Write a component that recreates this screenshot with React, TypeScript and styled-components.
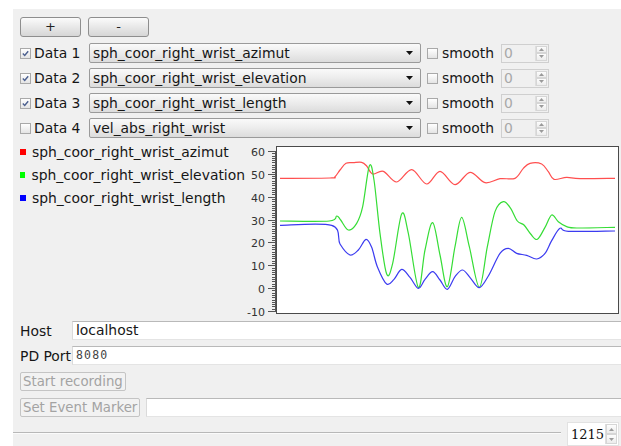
import React from "react";
import styled, { createGlobalStyle } from "styled-components";

const GlobalStyle = createGlobalStyle`
  html, body {
    margin: 0;
    padding: 0;
    background: #ffffff;
  }
  body {
    font-family: "DejaVu Sans", Verdana, sans-serif;
    font-size: 13.9px;
    color: #161616;
  }
`;

const Panel = styled.div`
  margin: 9px 0 0 13px;
  height: 437px;
  background: #f0f0f0;
  padding: 8px 0 0 7px;
  box-sizing: border-box;
  display: flex;
  flex-direction: column;
  overflow: hidden;
`;

const ButtonRow = styled.div`
  display: flex;
  gap: 7px;
`;

const PushButton = styled.button`
  width: 61px;
  height: 20px;
  padding: 0;
  border: 1px solid #8e8e8e;
  border-radius: 3px;
  background: linear-gradient(#fbfbfb, #e6e6e6 55%, #d6d6d6);
  font-family: "DejaVu Sans", Verdana, sans-serif;
  font-size: 13px;
  line-height: 16px;
  color: #222;
`;

const DataList = styled.div`
  margin-top: 6px;
  display: flex;
  flex-direction: column;
  gap: 5px;
`;

const DataRow = styled.div`
  display: flex;
  align-items: center;
  height: 20px;
`;

const CheckLabel = styled.label<{ $width?: number; $gap?: number }>`
  display: flex;
  align-items: center;
  gap: ${(p) => p.$gap ?? 3}px;
  width: ${(p) => (p.$width ? `${p.$width}px` : "auto")};
  flex: none;
  white-space: nowrap;
`;

const Box = styled.span`
  width: 9px;
  height: 9px;
  border: 1px solid #a9a9a9;
  background: linear-gradient(#ffffff, #e4e4e4);
  display: flex;
  align-items: center;
  justify-content: center;
  flex: none;
`;

const CheckBox = ({ checked }: { checked?: boolean }) => (
  <Box>
    {checked && (
      <svg width="7" height="7" viewBox="0 0 7 7">
        <path d="M0.8 3.6 L2.7 5.5 L6.2 1.2" fill="none" stroke="#4b5f8f" strokeWidth="1.4" />
      </svg>
    )}
  </Box>
);

const Combo = styled.div`
  width: 332px;
  height: 20px;
  box-sizing: border-box;
  border: 1px solid #9a9a9a;
  border-radius: 2px;
  background: linear-gradient(#fafafa, #ececec 50%, #dcdcdc);
  display: flex;
  align-items: center;
  padding: 0 7px 0 3px;
  margin-right: 6px;
  flex: none;

  & > span {
    flex: 1;
    white-space: nowrap;
  }
`;

const DropArrow = () => (
  <svg width="7" height="4" viewBox="0 0 7 4">
    <path d="M0 0 H7 L3.5 4 Z" fill="#111" />
  </svg>
);

const SpinBox = styled.div<{ $width: number; $disabled?: boolean }>`
  width: ${(p) => p.$width}px;
  height: 19px;
  box-sizing: border-box;
  border: 1px solid ${(p) => (p.$disabled ? "#cfcfcf" : "#bcbcbc")};
  background: ${(p) => (p.$disabled ? "#f0f0f0" : "#ffffff")};
  display: flex;
  align-items: stretch;
  flex: none;

  & > .value {
    flex: 1;
    padding-left: 2px;
    line-height: 17px;
    color: ${(p) => (p.$disabled ? "#a8a8a8" : "#111")};
  }
`;

const SpinButtons = styled.div`
  width: 11px;
  display: flex;
  flex-direction: column;
  border-left: 1px solid #dedede;
  margin: 1px 1px 1px 0;

  & > span {
    flex: 1;
    display: flex;
    align-items: center;
    justify-content: center;
    background: linear-gradient(#fdfdfd, #ececec);
    border: 1px solid #d6d6d6;
  }
`;

const SpinArrows = () => (
  <SpinButtons>
    <span>
      <svg width="5" height="3" viewBox="0 0 5 3">
        <path d="M0 3 L2.5 0 L5 3 Z" fill="#9a9a9a" />
      </svg>
    </span>
    <span>
      <svg width="5" height="3" viewBox="0 0 5 3">
        <path d="M0 0 L2.5 3 L5 0 Z" fill="#9a9a9a" />
      </svg>
    </span>
  </SpinButtons>
);

const PlotArea = styled.div`
  margin-top: 6px;
  display: flex;
  height: 176px;
`;

const Legend = styled.ul`
  list-style: none;
  margin: 0;
  padding: 0;
  width: 225px;
  display: flex;
  flex-direction: column;
  gap: 7px;
  flex: none;
`;

const LegendItem = styled.li<{ $color: string }>`
  display: flex;
  align-items: center;
  gap: 6px;
  height: 16px;
  white-space: nowrap;

  &::before {
    content: "";
    width: 6px;
    height: 6px;
    background: ${(p) => p.$color};
  }
`;

const FieldRow = styled.div<{ $gap: number }>`
  margin-top: ${(p) => p.$gap}px;
  display: flex;
  align-items: center;
  height: 19px;
`;

const FieldLabel = styled.span`
  width: 52px;
  flex: none;
  white-space: nowrap;
`;

const TextField = styled.div<{ $mono?: boolean }>`
  flex: 1;
  height: 19px;
  box-sizing: border-box;
  background: #ffffff;
  border-top: 1px solid #b9b9b9;
  border-left: 1px solid #dadada;
  border-bottom: 1px solid #e4e4e4;
  padding-left: 3px;
  line-height: 17px;
  white-space: nowrap;
  font-family: ${(p) => (p.$mono ? '"DejaVu Sans Mono", monospace' : "inherit")};
  font-size: ${(p) => (p.$mono ? "11.5px" : "inherit")};
  letter-spacing: ${(p) => (p.$mono ? "1.2px" : "normal")};
  color: ${(p) => (p.$mono ? "#444" : "#161616")};
`;

const FlatButton = styled.button`
  height: 19px;
  padding: 0 2px;
  border: 1px solid #c4c4c4;
  border-radius: 2px;
  background: #f2f2f2;
  font-family: "DejaVu Sans", Verdana, sans-serif;
  font-size: 13.3px;
  color: #a3a3a3;
  margin-right: 6px;
  flex: none;
  white-space: nowrap;
`;

const BottomRow = styled.div`
  margin-top: 5px;
  margin-left: -7px;
  display: flex;
  align-items: flex-start;
`;

const Groove = styled.div`
  flex: 1;
  margin-top: 10px;
  height: 1px;
  background: #b8b8b8;
  border-bottom: 1px solid #fbfbfb;
  margin-right: 6px;
`;

const FrameSpin = styled(SpinBox)`
  height: 24px;
  margin-right: 2px;
  border-color: #e2e2e2;

  & > .value {
    font-family: "DejaVu Serif", serif;
    font-size: 13px;
    line-height: 24px;
    padding-left: 3px;
  }
`;

// curve samples, x/y in 1/3 px steps relative to the plot svg
type Pt = [number, number];

const azimut: Pt[] = [
  [120, 115], [270, 114], [285, 110], [300, 90], [318, 70], [340, 68], [365, 67],
  [380, 78], [398, 102], [430, 94], [470, 126], [515, 89], [560, 132], [600, 94],
  [645, 134], [690, 97], [735, 128], [780, 116], [825, 115], [850, 85], [870, 70],
  [905, 72], [925, 95], [942, 118], [980, 112], [1020, 116], [1125, 115],
];

const elevation: Pt[] = [
  [120, 243], [268, 243], [290, 228], [302, 240], [325, 270], [350, 250],
  [368, 200], [388, 78], [402, 120], [420, 280], [440, 402], [458, 370],
  [485, 222], [505, 280], [535, 442], [555, 330], [578, 248], [600, 345],
  [622, 440], [645, 320], [665, 232], [688, 320], [718, 442], [742, 320],
  [765, 215], [790, 185], [812, 205], [832, 243], [852, 255], [872, 282],
  [892, 298], [915, 262], [935, 225], [955, 245], [980, 260], [1010, 264], [1125, 262],
];

const length: Pt[] = [
  [120, 256], [275, 256], [300, 312], [330, 345], [355, 330], [378, 298],
  [395, 322], [412, 380], [440, 432], [462, 418], [485, 388], [510, 412],
  [535, 445], [555, 418], [578, 395], [600, 420], [622, 448], [645, 410],
  [668, 390], [692, 415], [718, 443], [745, 408], [780, 340], [805, 325],
  [830, 340], [860, 346], [890, 357], [915, 340], [935, 302], [960, 265],
  [985, 274], [1125, 273],
];

const toLocal = ([x, y]: Pt): Pt => [x / 3 - 5, y / 3 - 4];

const smoothPath = (raw: Pt[]) => {
  const pts = raw.map(toLocal);
  let d = `M${pts[0][0].toFixed(2)},${pts[0][1].toFixed(2)}`;
  for (let i = 0; i < pts.length - 1; i++) {
    const p0 = pts[i - 1] ?? pts[i];
    const p1 = pts[i];
    const p2 = pts[i + 1];
    const p3 = pts[i + 2] ?? p2;
    const c1 = [p1[0] + (p2[0] - p0[0]) / 6, p1[1] + (p2[1] - p0[1]) / 6];
    const c2 = [p2[0] - (p3[0] - p1[0]) / 6, p2[1] - (p3[1] - p1[1]) / 6];
    d += ` C${c1[0].toFixed(2)},${c1[1].toFixed(2)} ${c2[0].toFixed(2)},${c2[1].toFixed(2)} ${p2[0].toFixed(2)},${p2[1].toFixed(2)}`;
  }
  return d;
};

const valueY = (v: number) => 7 + (60 - v) * (160 / 70);

const Plot = () => {
  const ticks: React.ReactNode[] = [];
  for (let v = -10; v <= 60; v++) {
    const y = Math.round(valueY(v)) + 0.5;
    const major = v % 10 === 0;
    ticks.push(
      <line key={v} x1={major ? 23 : 27} x2={30} y1={y} y2={y} stroke="#555" strokeWidth="1" />
    );
    if (major) {
      ticks.push(
        <text key={`l${v}`} x={20} y={y + 4} textAnchor="end" fontSize="11" fill="#333"
          fontFamily='"DejaVu Sans", Verdana, sans-serif'>
          {v}
        </text>
      );
    }
  }
  return (
    <svg width="376" height="176" viewBox="0 0 376 176">
      <line x1="30.5" x2="30.5" y1={valueY(60)} y2={valueY(-10) + 1} stroke="#555" />
      {ticks}
      <rect x="31.5" y="2.5" width="342" height="167" fill="#ffffff" stroke="#4a4a4a" />
      <path d={smoothPath(azimut)} fill="none" stroke="#ff4f4f" strokeWidth="1.2" />
      <path d={smoothPath(elevation)} fill="none" stroke="#36dd36" strokeWidth="1.2" />
      <path d={smoothPath(length)} fill="none" stroke="#3b3bf0" strokeWidth="1.2" />
    </svg>
  );
};

const rows = [
  { name: "Data 1", source: "sph_coor_right_wrist_azimut", on: true },
  { name: "Data 2", source: "sph_coor_right_wrist_elevation", on: true },
  { name: "Data 3", source: "sph_coor_right_wrist_length", on: true },
  { name: "Data 4", source: "vel_abs_right_wrist", on: false },
];

const legend = [
  { label: "sph_coor_right_wrist_azimut", color: "#ff0000" },
  { label: "sph_coor_right_wrist_elevation", color: "#00ff00" },
  { label: "sph_coor_right_wrist_length", color: "#0000ff" },
];

const App = () => (
  <>
    <GlobalStyle />
    <Panel>
      <ButtonRow>
        <PushButton>+</PushButton>
        <PushButton>-</PushButton>
      </ButtonRow>

      <DataList>
        {rows.map((r) => (
          <DataRow key={r.name}>
            <CheckLabel $width={69}>
              <CheckBox checked={r.on} />
              {r.name}
            </CheckLabel>
            <Combo>
              <span>{r.source}</span>
              <DropArrow />
            </Combo>
            <CheckLabel $width={74} $gap={4}>
              <CheckBox />
              smooth
            </CheckLabel>
            <SpinBox $width={48} $disabled>
              <span className="value">0</span>
              <SpinArrows />
            </SpinBox>
          </DataRow>
        ))}
      </DataList>

      <PlotArea>
        <Legend>
          {legend.map((l) => (
            <LegendItem key={l.label} $color={l.color}>
              {l.label}
            </LegendItem>
          ))}
        </Legend>
        <Plot />
      </PlotArea>

      <FieldRow $gap={1}>
        <FieldLabel>Host</FieldLabel>
        <TextField>localhost</TextField>
      </FieldRow>
      <FieldRow $gap={6}>
        <FieldLabel>PD Port</FieldLabel>
        <TextField $mono>8080</TextField>
      </FieldRow>
      <FieldRow $gap={7}>
        <FlatButton>Start recording</FlatButton>
      </FieldRow>
      <FieldRow $gap={7}>
        <FlatButton>Set Event Marker</FlatButton>
        <TextField />
      </FieldRow>

      <BottomRow>
        <Groove />
        <FrameSpin $width={52}>
          <span className="value">1215</span>
          <SpinArrows />
        </FrameSpin>
      </BottomRow>
    </Panel>
  </>
);

export default App;
